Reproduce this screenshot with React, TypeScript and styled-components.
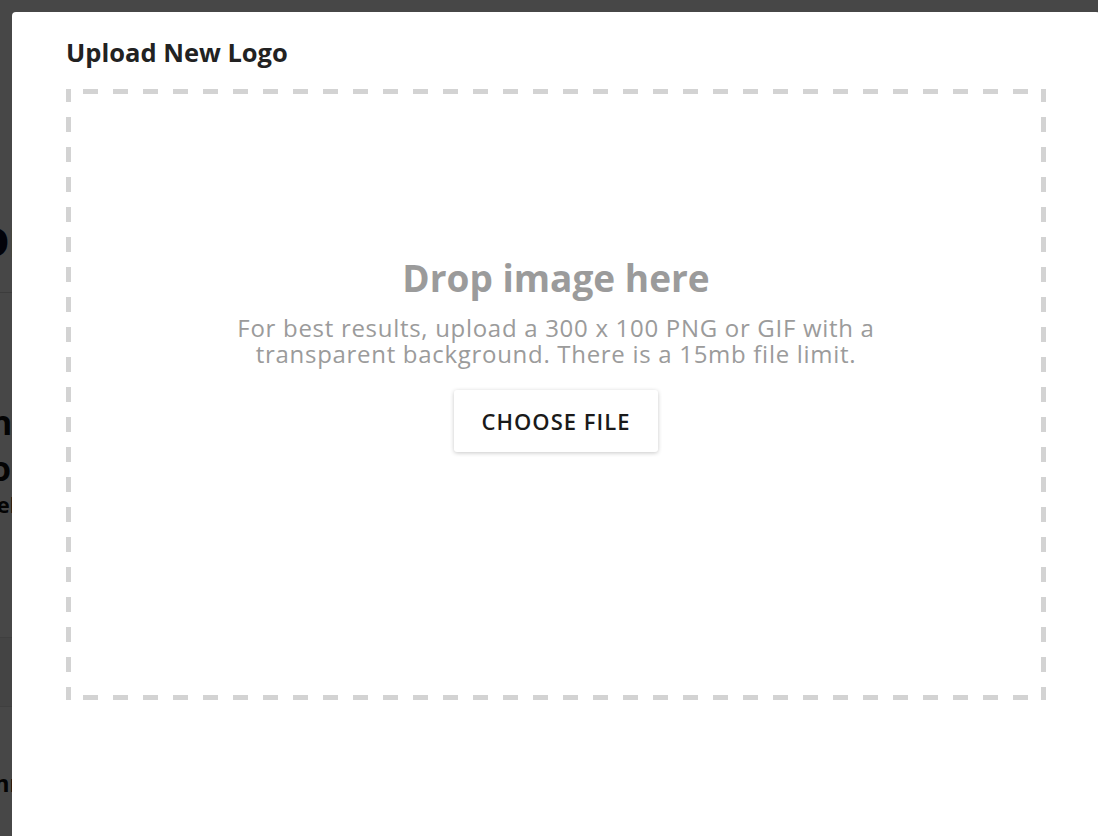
import React from "react";
import styled, { createGlobalStyle } from "styled-components";

const Global = createGlobalStyle`
  html, body { margin: 0; padding: 0; width: 1098px; height: 836px; overflow: hidden; background: #fff; }
  body { font-family: "Open Sans", "Liberation Sans", sans-serif; }
  * { box-sizing: border-box; }
`;

const Page = styled.div`
  position: relative;
  width: 1098px;
  height: 836px;
  overflow: hidden;
  background: #fff;
`;

const PageContent = styled.div`
  display: flex;
  flex-direction: column;
  margin-left: -30px;
  padding-top: 222px;
  color: #101030;
  font-family: "Open Sans", sans-serif;
`;

const PageHeading = styled.div`
  font-size: 40px;
  font-weight: 800;
  line-height: 40px;
  padding-left: 10px;
  color: #0d0d25;
`;

const Divider = styled.div<{ $gap: number }>`
  margin-top: ${(p) => p.$gap}px;
  height: 1px;
  background: #d8d8d8;
`;

const PageTitle = styled.div`
  font-size: 34px;
  font-weight: 700;
  line-height: 46px;
  padding-left: 20px;
  color: #111;
`;

const PageSub = styled.div`
  font-size: 22px;
  font-weight: 700;
  line-height: 26px;
  padding-left: 20px;
  color: #111;
`;

const Band = styled.div`
  margin-top: 120px;
  height: 70px;
  background: #f3f3f3;
  border-top: 1px solid #e2e2e2;
  border-bottom: 1px solid #e2e2e2;
`;

const FooterText = styled.div`
  margin-top: 59px;
  padding-left: 16px;
  font-size: 24px;
  font-weight: 700;
  color: #111;
`;

const Overlay = styled.div`
  position: absolute;
  inset: 0;
  background: rgba(0, 0, 0, 0.72);
  padding: 12px 0 0 12px;
`;

const Modal = styled.div`
  width: 1088px;
  height: 900px;
  background: #fff;
  border-radius: 4px;
  padding: 25px 54px 0 54px;
  display: flex;
  flex-direction: column;
`;

const Title = styled.h2`
  margin: 0;
  font-family: "Open Sans", sans-serif;
  font-size: 25.5px;
  font-weight: 700;
  line-height: 30px;
  color: #222;
`;

const dash = "#d3d3d3";

const DropZone = styled.div`
  margin-top: 22px;
  width: 980px;
  height: 611px;
  background-image:
    repeating-linear-gradient(to right, ${dash} 0 2px, transparent 2px 17px, ${dash} 17px 30px),
    repeating-linear-gradient(to right, ${dash} 0 2px, transparent 2px 17px, ${dash} 17px 30px),
    repeating-linear-gradient(to bottom, ${dash} 0 13px, transparent 13px 28px, ${dash} 28px 30px),
    repeating-linear-gradient(to bottom, ${dash} 0 13px, transparent 13px 28px, ${dash} 28px 30px);
  background-size: 100% 5px, 100% 5px, 5px 100%, 5px 100%;
  background-position: left top, left bottom, left top, right top;
  background-repeat: no-repeat;
  display: flex;
  flex-direction: column;
  align-items: center;
  padding: 167px 5px 5px;
  text-align: center;
`;

const DropTitle = styled.div`
  font-family: "Open Sans", sans-serif;
  font-size: 37px;
  font-weight: 700;
  line-height: 44px;
  color: #9b9b9b;
`;

const DropHint = styled.p`
  margin: 15px 0 0;
  font-family: "Open Sans", sans-serif;
  font-size: 24px;
  font-weight: 400;
  letter-spacing: 0.7px;
  line-height: 26px;
  color: #9b9b9b;
  max-width: 680px;
`;

const ChooseButton = styled.button`
  margin-top: 23px;
  height: 62px;
  width: 204px;
  padding: 0;
  border: none;
  border-radius: 3px;
  background: #fff;
  box-shadow: 0 1px 4px rgba(0, 0, 0, 0.22);
  font-family: "Open Sans", sans-serif;
  font-size: 22px;
  font-weight: 600;
  letter-spacing: 1px;
  color: #1a1a1a;
  cursor: pointer;
`;

export default function App() {
  return (
    <>
      <Global />
      <Page>
        <PageContent>
          <PageHeading>DD</PageHeading>
          <Divider $gap={30} />
          <PageTitle style={{ marginTop: 106 }}>hh</PageTitle>
          <PageTitle>oo</PageTitle>
          <PageSub>lele</PageSub>
          <Band />
          <FooterText>mm</FooterText>
        </PageContent>
        <Overlay>
          <Modal>
            <Title>Upload New Logo</Title>
            <DropZone>
              <DropTitle>Drop image here</DropTitle>
              <DropHint>
                For best results, upload a 300 x 100 PNG or GIF with a transparent background. There is a 15mb file limit.
              </DropHint>
              <ChooseButton>CHOOSE FILE</ChooseButton>
            </DropZone>
          </Modal>
        </Overlay>
      </Page>
    </>
  );
}
